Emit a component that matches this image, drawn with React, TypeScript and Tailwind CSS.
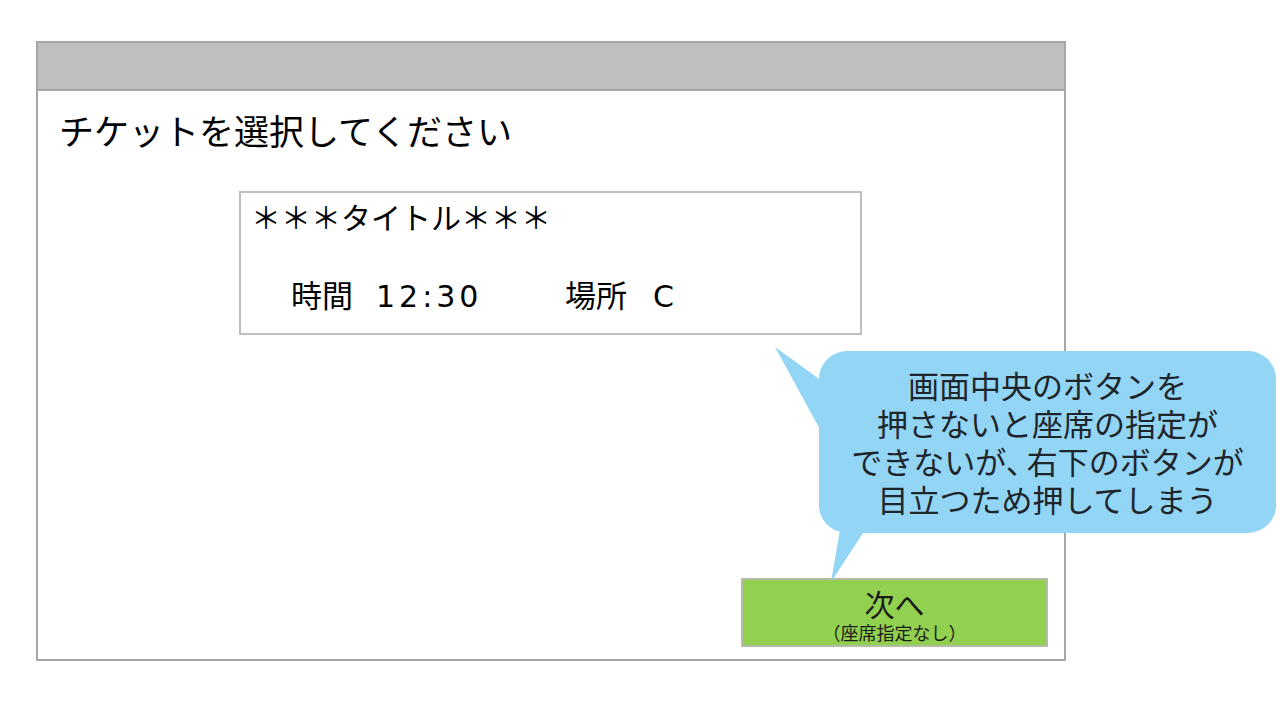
import React from "react";

const FONT = { fontFamily: '"Noto Sans CJK JP", "Noto Sans", sans-serif' };

export default function App() {
  return (
    <div
      className="relative w-[1280px] h-[720px] bg-white pt-[41px] pl-[36px] text-black overflow-hidden"
      style={FONT}
    >
      {/* Screen frame */}
      <div className="w-[1030px] h-[620px] border-2 border-[#a6a6a6] flex flex-col">
        <div className="h-[48px] bg-[#bfbfbf] border-b-2 border-[#a6a6a6] shrink-0" />
        <div className="pl-[21px] pt-[15px] text-[35px] leading-[48px]">チケットを選択してください</div>

        {/* Ticket card */}
        <div className="ml-[201px] mt-[37px] w-[623px] h-[144px] border-2 border-[#bfbfbf] flex flex-col">
          <div className="pl-[10px] pt-[3px] text-[30px] leading-[40px]">＊＊＊タイトル＊＊＊</div>
          <div className="pl-[50px] mt-[38px] flex items-baseline text-[31px] leading-[40px]">
            <span className="w-[85px]">時間</span>
            <span className="w-[189px] font-['DejaVu_Sans',sans-serif] text-[30px] tracking-[4px]">12:30</span>
            <span className="w-[88px]">場所</span>
            <span className="font-['DejaVu_Sans',sans-serif] text-[30px]">C</span>
          </div>
        </div>

        {/* Next button */}
        <div className="mt-auto self-end mr-[16px] mb-[12px] w-[307px] h-[69px] bg-[#92d050] border-2 border-[#b2bca6] flex flex-col items-center pt-[6px]">
          <div className="text-[30px] leading-[34px] text-[#1a1a1a]">次へ</div>
          <div className="mt-[1px] text-[18px] leading-[22px] text-[#1a1a1a]">（座席指定なし）</div>
        </div>
      </div>

      {/* Callout bubble */}
      <svg
        className="absolute left-[770px] top-[340px]"
        width="510"
        height="250"
        viewBox="0 0 510 250"
      >
        <rect x="49" y="11" width="457" height="182" rx="28" ry="28" fill="#93d5f4" />
        <polygon points="5,7 52,41 52,93" fill="#93d5f4" />
        <polygon points="70,190 95,190 61,242" fill="#93d5f4" />
      </svg>
      <div className="absolute left-[819px] top-[351px] w-[457px] h-[182px] flex flex-col items-center justify-center text-center text-[31px] leading-[38px] text-[#1e252b]">
        <div>画面中央のボタンを</div>
        <div>押さないと座席の指定が</div>
        <div>
          できないが<span className="-mr-[10px]">、</span>右下のボタンが
        </div>
        <div>目立つため押してしまう</div>
      </div>
    </div>
  );
}
